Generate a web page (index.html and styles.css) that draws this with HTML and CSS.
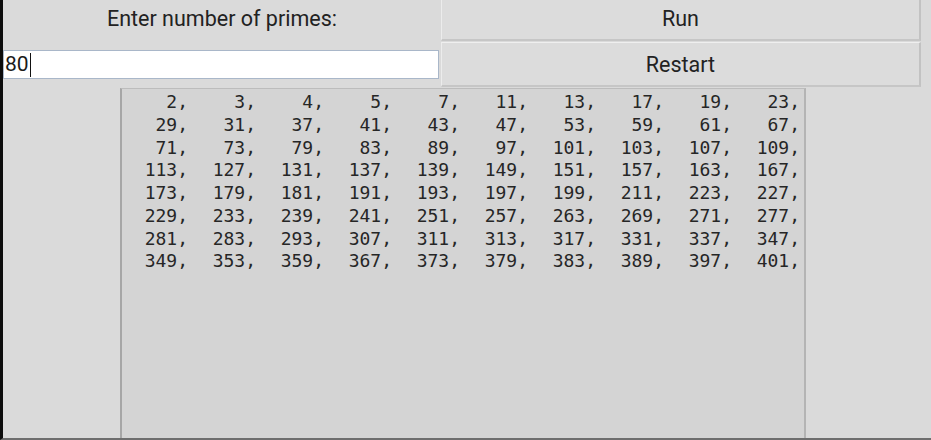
FILE: index.html
```html
<!DOCTYPE html>
<html lang="en">
<head>
<meta charset="utf-8">
<title>Primes</title>
<link rel="stylesheet" href="styles.css">
</head>
<body>
<div class="app">
  <div class="top">
    <div class="label">Enter number of primes:</div>
    <button class="btn btn-run">Run</button>
    <div class="entry-cell">
      <div class="entry">80<span class="caret"></span></div>
    </div>
    <button class="btn btn-restart">Restart</button>
  </div>
  <div class="output">
    <div class="grid">
      <span>2,</span><span>3,</span><span>4,</span><span>5,</span><span>7,</span><span>11,</span><span>13,</span><span>17,</span><span>19,</span><span>23,</span>
      <span>29,</span><span>31,</span><span>37,</span><span>41,</span><span>43,</span><span>47,</span><span>53,</span><span>59,</span><span>61,</span><span>67,</span>
      <span>71,</span><span>73,</span><span>79,</span><span>83,</span><span>89,</span><span>97,</span><span>101,</span><span>103,</span><span>107,</span><span>109,</span>
      <span>113,</span><span>127,</span><span>131,</span><span>137,</span><span>139,</span><span>149,</span><span>151,</span><span>157,</span><span>163,</span><span>167,</span>
      <span>173,</span><span>179,</span><span>181,</span><span>191,</span><span>193,</span><span>197,</span><span>199,</span><span>211,</span><span>223,</span><span>227,</span>
      <span>229,</span><span>233,</span><span>239,</span><span>241,</span><span>251,</span><span>257,</span><span>263,</span><span>269,</span><span>271,</span><span>277,</span>
      <span>281,</span><span>283,</span><span>293,</span><span>307,</span><span>311,</span><span>313,</span><span>317,</span><span>331,</span><span>337,</span><span>347,</span>
      <span>349,</span><span>353,</span><span>359,</span><span>367,</span><span>373,</span><span>379,</span><span>383,</span><span>389,</span><span>397,</span><span>401,</span>
    </div>
  </div>
</div>
</body>
</html>
```
FILE: styles.css
```css
html, body {
  margin: 0;
  padding: 0;
}

body {
  width: 931px;
  height: 440px;
  overflow: hidden;
  background: #dadada;
  font-family: Roboto, "Liberation Sans", sans-serif;
  color: #222;
}

.app {
  box-sizing: border-box;
  height: 440px;
  border-left: 3px solid #0c0c0c;
  border-bottom: 2px solid #6e6e6e;
  display: flex;
  flex-direction: column;
}

.top {
  display: grid;
  grid-template-columns: 438px 480px;
  grid-template-rows: 41px 45px;
  row-gap: 1px;
}

.label {
  display: flex;
  align-items: center;
  justify-content: center;
  font-size: 21.5px;
  padding-bottom: 5px;
  box-sizing: border-box;
}

.btn {
  margin: 0;
  padding: 0;
  font-family: Roboto, "Liberation Sans", sans-serif;
  font-size: 21.5px;
  color: #222;
  background: #dcdcdc;
  border-style: solid;
  border-width: 1px 2px 2px 1px;
  border-color: #efefef #c2c2c2 #c6c6c6 #ececec;
  border-radius: 0;
}

.btn-run {
  border-top-width: 0;
  padding-bottom: 3px;
}

.entry-cell {
  padding-top: 8px;
}

.entry {
  box-sizing: border-box;
  width: 436px;
  height: 29px;
  background: #fff;
  border: 1px solid #a9b7c9;
  font-size: 21px;
  line-height: 27px;
  padding-left: 1px;
  color: #1a1a1a;
  display: flex;
  align-items: center;
}

.caret {
  display: inline-block;
  width: 1.5px;
  height: 24px;
  background: #111;
  margin-left: 1px;
}

.output {
  flex: 1;
  box-sizing: border-box;
  margin: 1px 0 0 117px;
  width: 686px;
  background: #d4d4d4;
  border-style: solid;
  border-width: 1px 2px 0 2px;
  border-color: #bcbcbc #b4b4b4 #bcbcbc #a6a6a6;
  padding: 2px 0 0 0;
}

.grid {
  display: grid;
  grid-template-columns: repeat(10, 68px);
  font-family: "DejaVu Sans Mono", "Liberation Mono", monospace;
  font-size: 18px;
  line-height: 22.75px;
  color: #262626;
}

.grid span {
  text-align: right;
  padding-right: 2px;
}
```
